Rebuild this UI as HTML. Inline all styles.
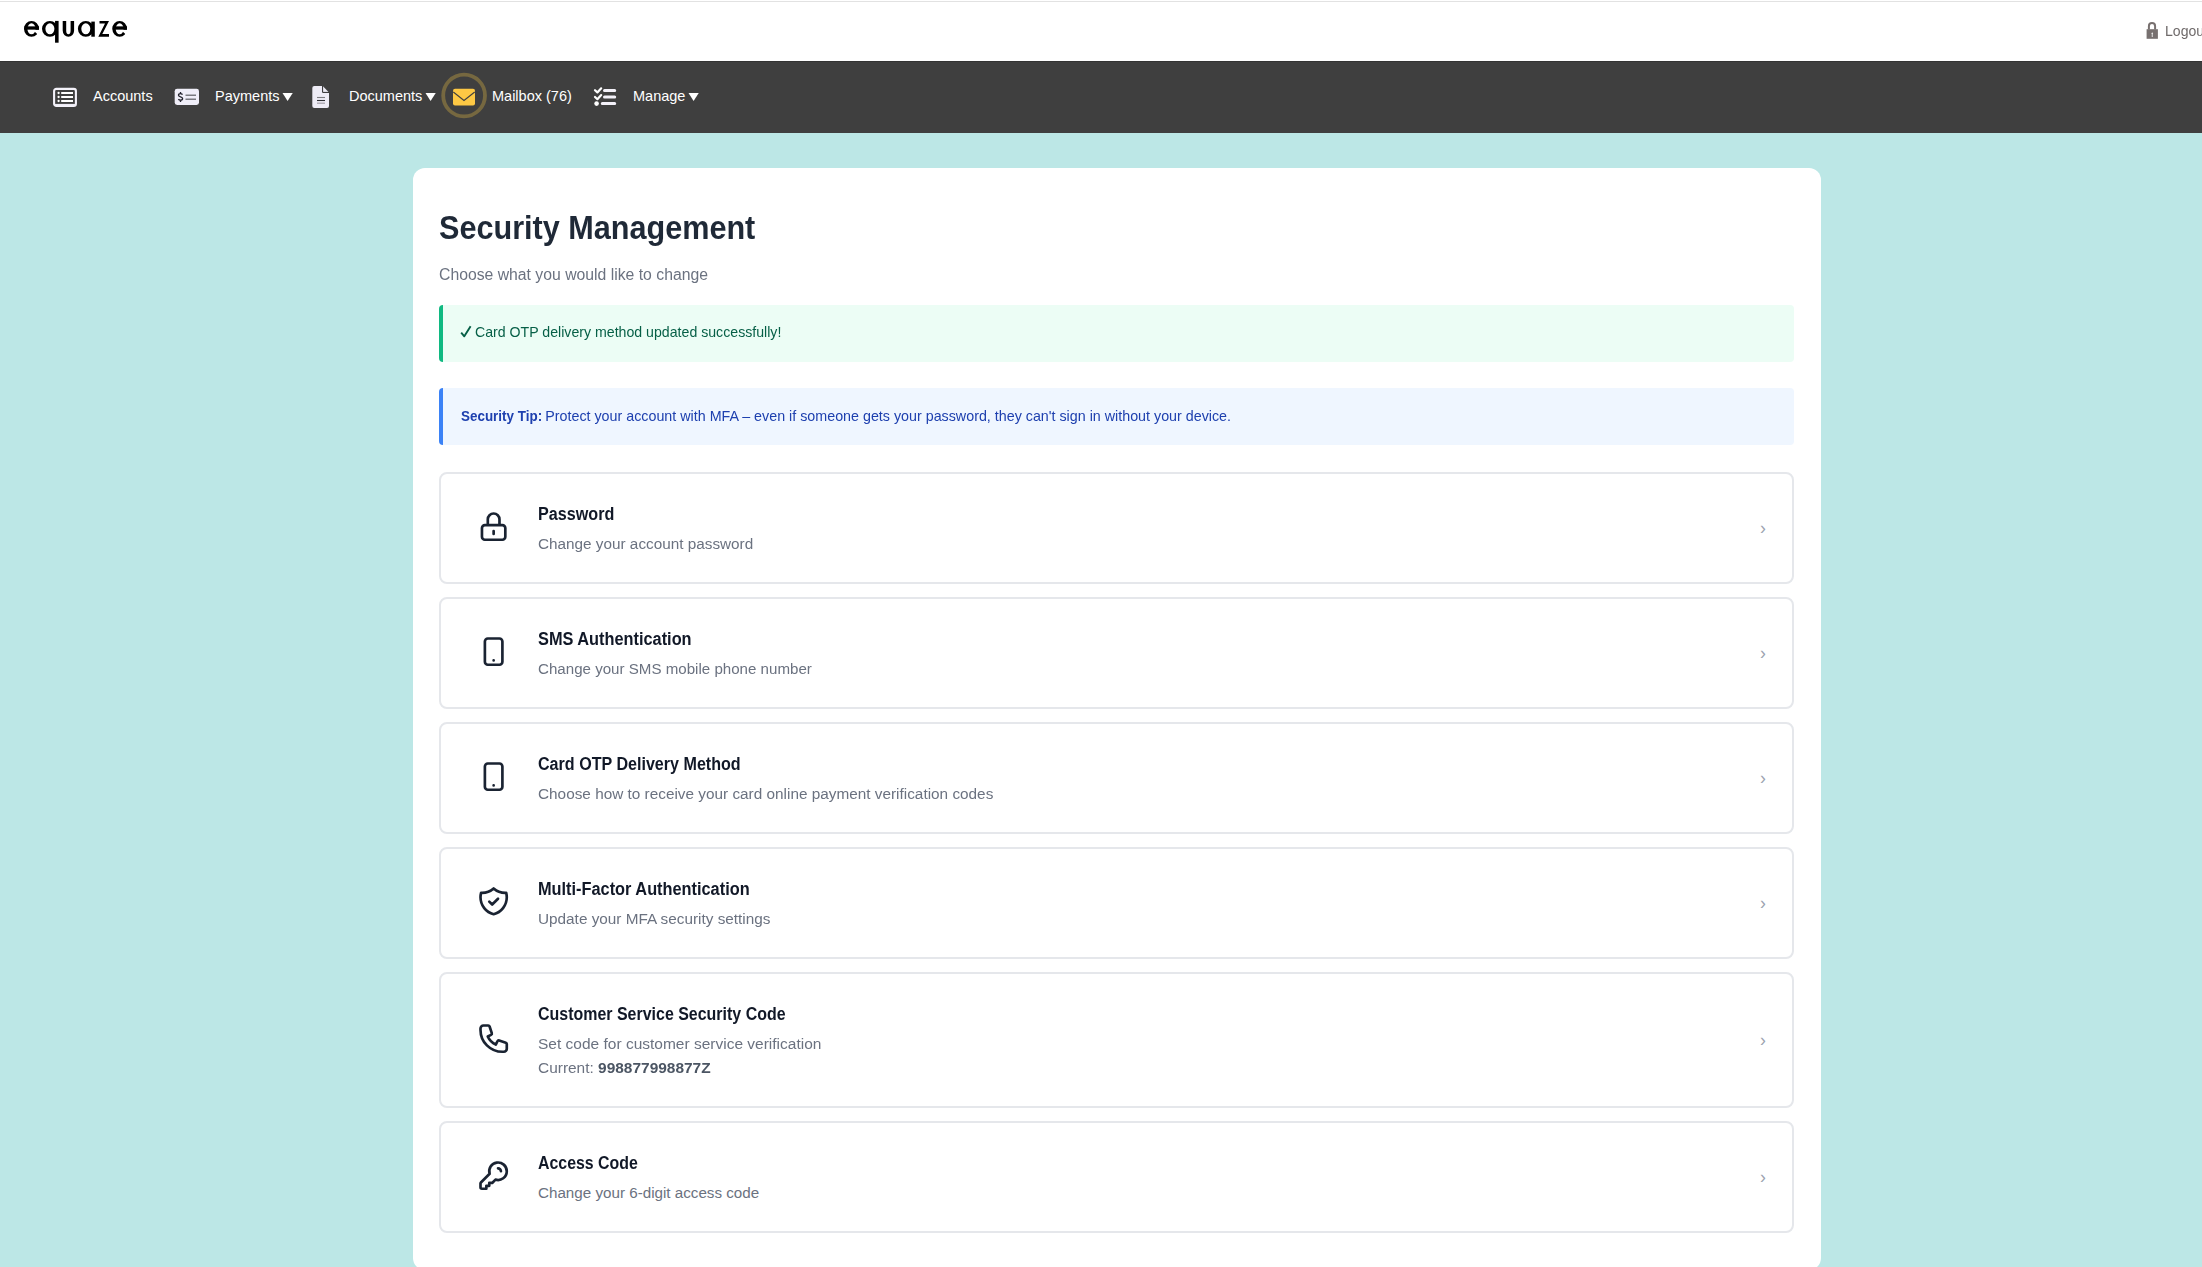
<!DOCTYPE html>
<html><head><meta charset="utf-8"><title>Security Management</title>
<style>
html,body{margin:0;padding:0}
body{width:2202px;height:1267px;overflow:hidden;position:relative;background:#bce7e6;font-family:"Liberation Sans", sans-serif}
.t{position:absolute;white-space:nowrap}
b{font-weight:700}
</style></head><body>
<div style="position:absolute;left:0;top:0;width:2202px;height:61px;background:#fff"></div>
<div style="position:absolute;left:0;top:1px;width:2202px;height:1px;background:#e2e2e2"></div>
<svg style="position:absolute;left:0;top:0" width="140" height="60" viewBox="0 0 140 60"><g fill="#000">
<mask id="em1"><rect x="0" y="0" width="140" height="60" fill="#fff"/><path d="M31.50 29.65 H45.50 V42.80 L42.56 38.93 L31.50 28.80 Z" fill="#000"/></mask>
<path mask="url(#em1)" fill-rule="evenodd" d="M24.00 28.80 a7.50 7.90 0 1 0 15.00 0 a7.50 7.90 0 1 0 -15.00 0 Z M27.40 28.80 a4.10 5.45 0 1 0 8.20 0 a4.10 5.45 0 1 0 -8.20 0 Z"/>
<rect x="24.50" y="26.35" width="14.50" height="3.3"/>
<path fill-rule="evenodd" d="M42.00 28.80 a7.90 7.90 0 1 0 15.80 0 a7.90 7.90 0 1 0 -15.80 0 Z M45.40 28.80 a4.50 5.45 0 1 0 9.00 0 a4.50 5.45 0 1 0 -9.00 0 Z"/>
<rect x="55.05" y="20.9" width="3.55" height="21.8"/>
<path d="M62.7 20.9 V30.5 A5.7 6.2 0 0 0 74.1 30.5 V20.9 H70.6 V30.5 A2.2 3.75 0 0 1 66.2 30.5 V20.9 Z"/>
<path fill-rule="evenodd" d="M77.90 28.80 a7.90 7.90 0 1 0 15.80 0 a7.90 7.90 0 1 0 -15.80 0 Z M81.30 28.80 a4.50 5.45 0 1 0 9.00 0 a4.50 5.45 0 1 0 -9.00 0 Z"/>
<rect x="91.3" y="21.6" width="3.5" height="15.1"/>
<path d="M99.5 20.9 H109 L102.3 34 H109 V36.7 H98.3 L105 23.4 H99.5 Z"/>
<mask id="em2"><rect x="0" y="0" width="140" height="60" fill="#fff"/><path d="M119.65 29.65 H133.65 V42.80 L130.71 38.93 L119.65 28.80 Z" fill="#000"/></mask>
<path mask="url(#em2)" fill-rule="evenodd" d="M112.30 28.80 a7.35 7.90 0 1 0 14.70 0 a7.35 7.90 0 1 0 -14.70 0 Z M115.70 28.80 a3.95 5.45 0 1 0 7.90 0 a3.95 5.45 0 1 0 -7.90 0 Z"/>
<rect x="112.80" y="26.35" width="14.20" height="3.3"/>
</g></svg>
<svg style="position:absolute;left:2145px;top:21px" width="14" height="19" viewBox="0 0 14 19">
<path d="M3.9 8.5 V5.2 A3.1 3.1 0 0 1 10.1 5.2 V8.5" fill="none" stroke="#77706f" stroke-width="2"/>
<rect x="1.6" y="8.2" width="11.3" height="9.6" fill="#77706f"/>
<path d="M7.2 11.2 L6.2 12.8 H6.8 V16 H7.6 V12.8 H8.2 Z" fill="#fff"/>
</svg>
<div class="t" style="left:2164.7px;top:23.53px;font-size:14.5px;line-height:14.5px;color:#6f6a6a;font-weight:400;transform:scaleX(0.97);transform-origin:0 0;">Logout</div>
<div style="position:absolute;left:0;top:61px;width:2202px;height:72px;background:#3f3f3f;border-top:1px solid #333;box-sizing:border-box"></div>
<svg style="position:absolute;left:50px;top:84px" width="30" height="26" viewBox="0 0 30 26">
<rect x="4.1" y="4.9" width="21.8" height="17" rx="2.2" fill="none" stroke="#f4f2fa" stroke-width="2.1"/>
<path d="M5 20.6 H25" stroke="#ece9f3" stroke-width="1.4"/>
<circle cx="8.6" cy="9" r="1.15" fill="#fff"/><circle cx="8.6" cy="13" r="1.15" fill="#fff"/><circle cx="8.6" cy="17" r="1.15" fill="#fff"/>
<path d="M11.2 9 H23 M11.2 13 H23 M11.2 17 H23" stroke="#fff" stroke-width="1.9"/>
</svg>
<div class="t" style="left:93px;top:88.63px;font-size:14.5px;line-height:14.5px;color:#ffffff;font-weight:400;">Accounts</div>
<svg style="position:absolute;left:172px;top:85px" width="30" height="24" viewBox="0 0 30 24">
<rect x="2.7" y="3.8" width="24.3" height="16.2" rx="2.4" fill="#f0eef8"/>
<path d="M10.5 9.7 C10 8.9 9.3 8.6 8.5 8.6 C7.3 8.6 6.5 9.3 6.5 10.3 C6.5 12.3 10.6 11.4 10.6 13.5 C10.6 14.5 9.7 15.2 8.5 15.2 C7.6 15.2 6.8 14.8 6.4 14.1 M8.5 7.1 V8.6 M8.5 15.2 V17" fill="none" stroke="#25252f" stroke-width="1.35"/>
<path d="M13.5 10.3 H24 M13.5 14.3 H24" stroke="#7a7a80" stroke-width="1.5"/>
</svg>
<div class="t" style="left:215px;top:88.63px;font-size:14.5px;line-height:14.5px;color:#ffffff;font-weight:400;">Payments</div>
<svg style="position:absolute;left:280px;top:90px" width="15" height="13" viewBox="0 0 15 13"><path d="M2.5 3 H12.75 L7.6 11 Z" fill="#fff"/></svg>
<svg style="position:absolute;left:308px;top:82px" width="26" height="30" viewBox="0 0 26 30">
<path d="M6.3 4 H14.7 L21 10.4 V24 A2 2 0 0 1 19 26 H6.3 A2 2 0 0 1 4.3 24 V6 A2 2 0 0 1 6.3 4 Z" fill="#eeecf6"/>
<path d="M14.6 4 V10.4 H21" fill="none" stroke="#2b2b2b" stroke-width="1"/>
<path d="M9 15.5 H17" stroke="#7c7c80" stroke-width="1.1"/><path d="M9 18.5 H17" stroke="#2e2e33" stroke-width="1.1"/><path d="M9 21.2 H17" stroke="#a8a6ae" stroke-width="1.3"/>
</svg>
<div class="t" style="left:349px;top:88.63px;font-size:14.5px;line-height:14.5px;color:#ffffff;font-weight:400;">Documents</div>
<svg style="position:absolute;left:423px;top:90px" width="15" height="13" viewBox="0 0 15 13"><path d="M2.5 3 H12.75 L7.6 11 Z" fill="#fff"/></svg>
<svg style="position:absolute;left:437px;top:70px" width="54" height="54" viewBox="0 0 54 54">
<circle cx="27.1" cy="25.5" r="20.9" fill="none" stroke="#766840" stroke-width="3.8"/>
<rect x="16" y="18.8" width="22" height="16.6" rx="2" fill="#fdc844"/>
<path d="M16.3 22 L27 30.5 L37.7 22" fill="none" stroke="#3f3f3f" stroke-width="1.1"/>
</svg>
<div class="t" style="left:492px;top:88.63px;font-size:14.5px;line-height:14.5px;color:#ffffff;font-weight:400;">Mailbox (76)</div>
<svg style="position:absolute;left:588px;top:80px" width="34" height="32" viewBox="0 0 34 32">
<path d="M7 10.2 L9.4 12.4 L13.2 8.3 M7 17 L9.4 19.2 L13.2 15.1" fill="none" stroke="#fff" stroke-width="2.2" stroke-linecap="round" stroke-linejoin="round"/>
<path d="M16.5 10.4 H26.7 M16.5 17.1 H26.7 M14.3 23.6 H26.7" stroke="#f3f1f9" stroke-width="3" stroke-linecap="round"/>
<circle cx="8.6" cy="23.6" r="2.3" fill="#fff"/>
</svg>
<div class="t" style="left:633px;top:88.63px;font-size:14.5px;line-height:14.5px;color:#ffffff;font-weight:400;">Manage</div>
<svg style="position:absolute;left:686px;top:90px" width="15" height="13" viewBox="0 0 15 13"><path d="M2.5 3 H12.75 L7.6 11 Z" fill="#fff"/></svg>
<div style="position:absolute;left:413px;top:168px;width:1408px;height:1102px;background:#fff;border-radius:12px"></div>
<div class="t" style="left:439px;top:209.92px;font-size:34px;line-height:34px;color:#1f2937;font-weight:700;transform:scaleX(0.9);transform-origin:0 0;">Security Management</div>
<div class="t" style="left:439px;top:266.96px;font-size:16px;line-height:16px;color:#6b7280;font-weight:400;transform:scaleX(0.985);transform-origin:0 0;">Choose what you would like to change</div>
<div style="position:absolute;left:439px;top:305px;width:1355px;height:57px;background:#ecfdf5;border-left:4px solid #10b981;border-radius:4px;box-sizing:border-box"></div>
<svg style="position:absolute;left:458px;top:324px" width="16" height="16" viewBox="0 0 16 16"><path d="M3.2 8.6 L6.3 12.3 L12.6 2.3" fill="none" stroke="#065f46" stroke-width="1.9" stroke-linejoin="round"/></svg>
<div class="t" style="left:475.3px;top:324.78px;font-size:14.2px;line-height:14.2px;color:#065f46;font-weight:400;transform:scaleX(0.997);transform-origin:0 0;">Card OTP delivery method updated successfully!</div>
<div style="position:absolute;left:439px;top:388px;width:1355px;height:57px;background:#eff6ff;border-left:4px solid #3b82f6;border-radius:4px;box-sizing:border-box"></div>
<div class="t" style="left:461px;top:408.58px;font-size:14.2px;line-height:14.2px;color:#1e40af;font-weight:400;transform:scaleX(1.0072);transform-origin:0 0;"><b style="display:inline-block;transform:scaleX(0.94);transform-origin:0 0;margin-right:-6px">Security Tip:</b> Protect your account with MFA &ndash; even if someone gets your password, they can&#39;t sign in without your device.</div>
<div style="position:absolute;left:439px;top:472px;width:1355px;height:112px;border:2px solid #e5e7eb;border-radius:8px;box-sizing:border-box"></div>
<svg style="position:absolute;left:473px;top:506px" width="40" height="40" viewBox="0 0 40 40" fill="none" stroke="#1a2332" stroke-width="1.83" stroke-linecap="round" stroke-linejoin="round"><g transform="translate(3.12 3.12) scale(1.46)"><path d="M12 15v2m-6 4h12a2 2 0 002-2v-6a2 2 0 00-2-2H6a2 2 0 00-2 2v6a2 2 0 002 2zm10-10V7a4 4 0 00-8 0v4h8z"/></g></svg>
<div class="t" style="left:538px;top:504.96px;font-size:18px;line-height:18px;color:#111827;font-weight:700;transform:scaleX(0.897);transform-origin:0 0;">Password</div>
<div class="t" style="left:538px;top:535.93px;font-size:15.2px;line-height:15.2px;color:#6b7280;font-weight:400;transform:scaleX(1.0075);transform-origin:0 0;">Change your account password</div>
<div class="t" style="left:1760px;top:519.89px;font-size:17.5px;line-height:17.5px;color:#9ca3af;font-weight:400;">&rsaquo;</div>
<div style="position:absolute;left:439px;top:597px;width:1355px;height:112px;border:2px solid #e5e7eb;border-radius:8px;box-sizing:border-box"></div>
<svg style="position:absolute;left:473px;top:631px" width="40" height="40" viewBox="0 0 40 40" fill="none" stroke="#1a2332" stroke-width="1.83" stroke-linecap="round" stroke-linejoin="round"><g transform="translate(3.12 3.12) scale(1.46)"><path d="M12 18h.01M8 21h8a2 2 0 002-2V5a2 2 0 00-2-2H8a2 2 0 00-2 2v14a2 2 0 002 2z"/></g></svg>
<div class="t" style="left:538px;top:629.96px;font-size:18px;line-height:18px;color:#111827;font-weight:700;transform:scaleX(0.907);transform-origin:0 0;">SMS Authentication</div>
<div class="t" style="left:538px;top:660.93px;font-size:15.2px;line-height:15.2px;color:#6b7280;font-weight:400;transform:scaleX(0.995);transform-origin:0 0;">Change your SMS mobile phone number</div>
<div class="t" style="left:1760px;top:644.89px;font-size:17.5px;line-height:17.5px;color:#9ca3af;font-weight:400;">&rsaquo;</div>
<div style="position:absolute;left:439px;top:722px;width:1355px;height:112px;border:2px solid #e5e7eb;border-radius:8px;box-sizing:border-box"></div>
<svg style="position:absolute;left:473px;top:756px" width="40" height="40" viewBox="0 0 40 40" fill="none" stroke="#1a2332" stroke-width="1.83" stroke-linecap="round" stroke-linejoin="round"><g transform="translate(3.12 3.12) scale(1.46)"><path d="M12 18h.01M8 21h8a2 2 0 002-2V5a2 2 0 00-2-2H8a2 2 0 00-2 2v14a2 2 0 002 2z"/></g></svg>
<div class="t" style="left:538px;top:754.96px;font-size:18px;line-height:18px;color:#111827;font-weight:700;transform:scaleX(0.894);transform-origin:0 0;">Card OTP Delivery Method</div>
<div class="t" style="left:538px;top:785.93px;font-size:15.2px;line-height:15.2px;color:#6b7280;font-weight:400;transform:scaleX(1.01);transform-origin:0 0;">Choose how to receive your card online payment verification codes</div>
<div class="t" style="left:1760px;top:769.89px;font-size:17.5px;line-height:17.5px;color:#9ca3af;font-weight:400;">&rsaquo;</div>
<div style="position:absolute;left:439px;top:847px;width:1355px;height:112px;border:2px solid #e5e7eb;border-radius:8px;box-sizing:border-box"></div>
<svg style="position:absolute;left:473px;top:881px" width="40" height="40" viewBox="0 0 40 40" fill="none" stroke="#1a2332" stroke-width="1.83" stroke-linecap="round" stroke-linejoin="round"><g transform="translate(3.12 3.12) scale(1.46)"><path d="M9 12l2 2 4-4m5.618-4.016A11.955 11.955 0 0112 2.944a11.955 11.955 0 01-8.618 3.04A12.02 12.02 0 003 9c0 5.591 3.824 10.29 9 11.622 5.176-1.332 9-6.03 9-11.622 0-1.042-.133-2.052-.382-3.016z"/></g></svg>
<div class="t" style="left:538px;top:879.96px;font-size:18px;line-height:18px;color:#111827;font-weight:700;transform:scaleX(0.907);transform-origin:0 0;">Multi-Factor Authentication</div>
<div class="t" style="left:538px;top:910.93px;font-size:15.2px;line-height:15.2px;color:#6b7280;font-weight:400;transform:scaleX(1.0087);transform-origin:0 0;">Update your MFA security settings</div>
<div class="t" style="left:1760px;top:894.89px;font-size:17.5px;line-height:17.5px;color:#9ca3af;font-weight:400;">&rsaquo;</div>
<div style="position:absolute;left:439px;top:972px;width:1355px;height:136px;border:2px solid #e5e7eb;border-radius:8px;box-sizing:border-box"></div>
<svg style="position:absolute;left:473px;top:1018px" width="40" height="40" viewBox="0 0 40 40" fill="none" stroke="#1a2332" stroke-width="1.83" stroke-linecap="round" stroke-linejoin="round"><g transform="translate(3.12 3.12) scale(1.46)"><path d="M3 5a2 2 0 012-2h3.28a1 1 0 01.948.684l1.498 4.493a1 1 0 01-.502 1.21l-2.257 1.13a11.042 11.042 0 005.516 5.516l1.13-2.257a1 1 0 011.21-.502l4.493 1.498a1 1 0 01.684.949V19a2 2 0 01-2 2h-1C9.716 21 3 14.284 3 6V5z"/></g></svg>
<div class="t" style="left:538px;top:1004.96px;font-size:18px;line-height:18px;color:#111827;font-weight:700;transform:scaleX(0.887);transform-origin:0 0;">Customer Service Security Code</div>
<div class="t" style="left:538px;top:1035.93px;font-size:15.2px;line-height:15.2px;color:#6b7280;font-weight:400;transform:scaleX(1.0206);transform-origin:0 0;">Set code for customer service verification</div>
<div class="t" style="left:538px;top:1059.93px;font-size:15.2px;line-height:15.2px;color:#6b7280;font-weight:400;transform:scaleX(1.017);transform-origin:0 0;">Current: <b style="color:#4b5563">998877998877Z</b></div>
<div class="t" style="left:1760px;top:1031.89px;font-size:17.5px;line-height:17.5px;color:#9ca3af;font-weight:400;">&rsaquo;</div>
<div style="position:absolute;left:439px;top:1121px;width:1355px;height:112px;border:2px solid #e5e7eb;border-radius:8px;box-sizing:border-box"></div>
<svg style="position:absolute;left:473px;top:1155px" width="40" height="40" viewBox="0 0 40 40" fill="none" stroke="#1a2332" stroke-width="1.83" stroke-linecap="round" stroke-linejoin="round"><g transform="translate(3.12 3.12) scale(1.46)"><path d="M15 7a2 2 0 012 2m4 0a6 6 0 01-7.743 5.743L11 17H9v2H7v2H4a1 1 0 01-1-1v-2.586a1 1 0 01.293-.707l5.964-5.964A6 6 0 1121 9z"/></g></svg>
<div class="t" style="left:538px;top:1153.96px;font-size:18px;line-height:18px;color:#111827;font-weight:700;transform:scaleX(0.883);transform-origin:0 0;">Access Code</div>
<div class="t" style="left:538px;top:1184.93px;font-size:15.2px;line-height:15.2px;color:#6b7280;font-weight:400;">Change your 6-digit access code</div>
<div class="t" style="left:1760px;top:1168.89px;font-size:17.5px;line-height:17.5px;color:#9ca3af;font-weight:400;">&rsaquo;</div>
</body></html>
